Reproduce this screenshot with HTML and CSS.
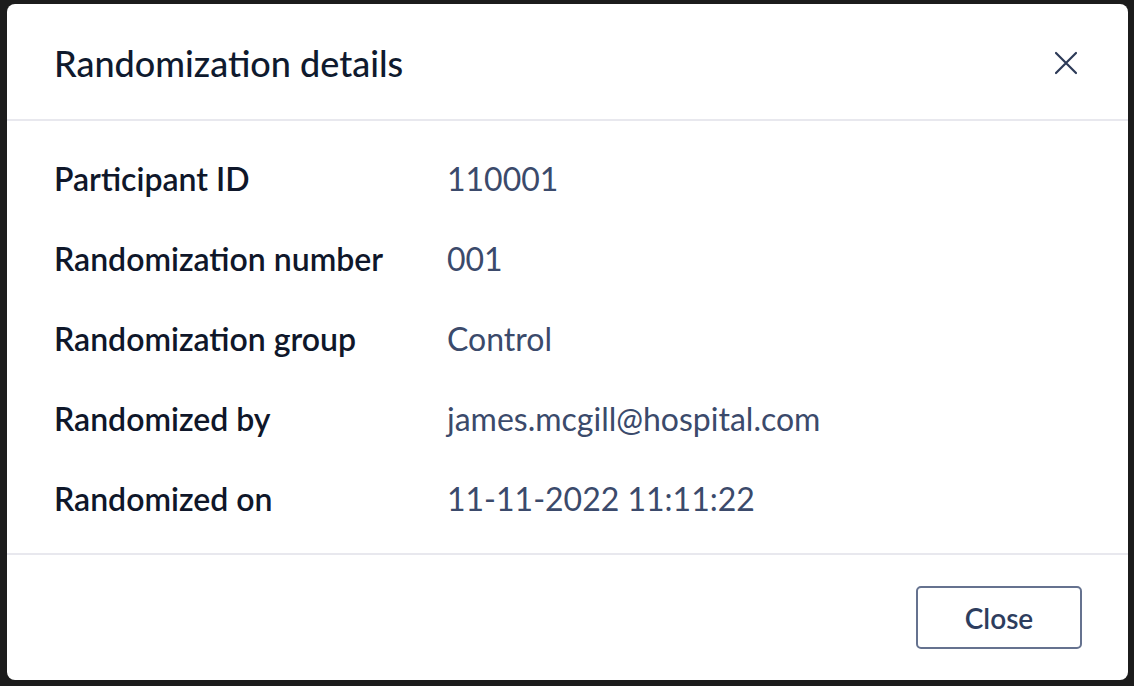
FILE: index.html
```html
<!DOCTYPE html>
<html>
<head>
<meta charset="utf-8">
<link rel="stylesheet" href="styles.css">
</head>
<body>
<div class="dialog">
  <div class="dialog-header">
    <h1 class="dialog-title">Randomization details</h1>
    <button class="icon-btn" aria-label="Close">
      <svg width="24" height="24" viewBox="0 0 24 24"><path d="M2 2 L22 22 M22 2 L2 22" stroke="#2c3a57" stroke-width="2.2" stroke-linecap="round" fill="none"/></svg>
    </button>
  </div>
  <div class="dialog-body">
    <div class="row"><div class="label">Participant ID</div><div class="value">110001</div></div>
    <div class="row"><div class="label">Randomization number</div><div class="value">001</div></div>
    <div class="row"><div class="label">Randomization group</div><div class="value">Control</div></div>
    <div class="row"><div class="label">Randomized by</div><div class="value">james.mcgill@hospital.com</div></div>
    <div class="row"><div class="label">Randomized on</div><div class="value">11-11-2022 11:11:22</div></div>
  </div>
  <div class="dialog-footer">
    <button class="btn">Close</button>
  </div>
</div>
</body>
</html>
```
FILE: styles.css
```css
html, body { height: 100%; }
body {
  margin: 0;
  background: #1c1c1c;
  padding: 4px 6px 6px 7px;
  box-sizing: border-box;
  font-family: Lato, "Noto Sans", sans-serif;
}
.dialog {
  height: 100%;
  background: #fff;
  border-radius: 8px;
  display: flex;
  flex-direction: column;
  overflow: hidden;
}
.dialog-header {
  height: 115px;
  flex: none;
  display: flex;
  align-items: center;
  justify-content: space-between;
  padding: 2px 48px 0 47px;
  box-sizing: border-box;
  height: 117px;
  border-bottom: 2px solid #e8e8ee;
}
.dialog-title {
  margin: 0;
  font-size: 36px;
  font-weight: 500;
  color: #0f1a2e;
  letter-spacing: 0;
}
.icon-btn {
  background: none;
  border: 0;
  padding: 0;
  width: 24px;
  height: 24px;
  display: flex;
  margin-right: 2px;
}
.dialog-body {
  flex: 1;
  padding: 17px 48px 0 47px;
  border-bottom: 2px solid #e8e8ee;
}
.row {
  display: flex;
  height: 80px;
  align-items: center;
  font-size: 32px;
}
.label {
  width: 393px;
  flex: none;
  font-weight: 600;
  color: #0f172a;
}
.value {
  color: #3b4a6b;
}
.dialog-footer {
  height: 125px;
  flex: none;
  display: flex;
  align-items: center;
  justify-content: flex-end;
  padding: 0 46px;
}
.btn {
  width: 166px;
  height: 63px;
  background: #fff;
  border: 2px solid #65728f;
  border-radius: 5px;
  font-family: Lato, "Noto Sans", sans-serif;
  font-size: 28px;
  font-weight: 600;
  color: #2d3d5e;
}
```
